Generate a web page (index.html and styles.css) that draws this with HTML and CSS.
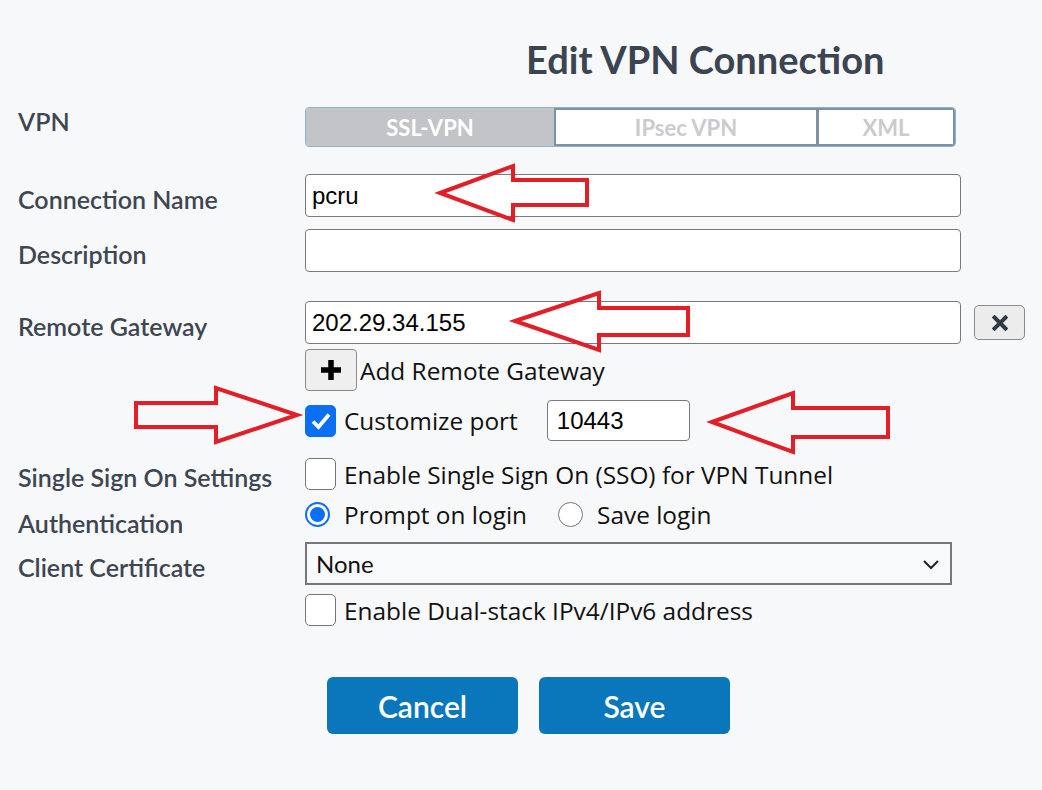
FILE: index.html
```html
<!DOCTYPE html>
<html>
<head>
<meta charset="utf-8">
<link rel="stylesheet" href="styles.css">
</head>
<body>
<div class="page">
  <h1 class="title">Edit VPN Connection</h1>

  <div class="row row-vpn">
    <div class="label label-top">VPN</div>
    <div class="control">
      <div class="segmented">
        <div class="seg seg-active seg-ssl">SSL-VPN</div>
        <div class="seg seg-ipsec">IPsec VPN</div>
        <div class="seg seg-xml">XML</div>
      </div>
    </div>
  </div>

  <div class="row row-name">
    <div class="label">Connection Name</div>
    <div class="control"><div class="input wide">pcru</div></div>
  </div>

  <div class="row row-desc">
    <div class="label">Description</div>
    <div class="control"><div class="input wide"></div></div>
  </div>

  <div class="row row-gw">
    <div class="label">Remote Gateway</div>
    <div class="control">
      <div class="input wide">202.29.34.155</div>
      <div class="icon-btn del-btn">
        <svg width="16" height="16" viewBox="0 0 16 16"><path d="M2.5 2.5 L13.5 13.5 M13.5 2.5 L2.5 13.5" stroke="#2f3a45" stroke-width="4" stroke-linecap="square"/></svg>
      </div>
    </div>
  </div>

  <div class="row row-add">
    <div class="label"></div>
    <div class="control">
      <div class="icon-btn add-btn">
        <svg width="22" height="22" viewBox="0 0 22 22"><path d="M11 1 V21 M1 11 H21" stroke="#000" stroke-width="5.5"/></svg>
      </div>
      <span class="opt-text add-text">Add Remote Gateway</span>
    </div>
  </div>

  <div class="row row-port">
    <div class="label"></div>
    <div class="control">
      <span class="check checked">
        <svg width="24" height="24" viewBox="0 0 24 24"><path d="M4 12.5 L9.5 18 L20 5.5" stroke="#fff" stroke-width="3.8" fill="none"/></svg>
      </span>
      <span class="opt-text">Customize port</span>
      <div class="input port">10443</div>
    </div>
  </div>

  <div class="row row-sso">
    <div class="label">Single Sign On Settings</div>
    <div class="control">
      <span class="check"></span>
      <span class="opt-text">Enable Single Sign On (SSO) for VPN Tunnel</span>
    </div>
  </div>

  <div class="row row-auth">
    <div class="label label-auth">Authentication</div>
    <div class="control">
      <span class="radio on"><span class="dot"></span></span>
      <span class="opt-text">Prompt on login</span>
      <span class="radio radio-second"></span>
      <span class="opt-text">Save login</span>
    </div>
  </div>

  <div class="row row-cert">
    <div class="label">Client Certificate</div>
    <div class="control">
      <div class="select">
        <span>None</span>
        <svg width="18" height="12" viewBox="0 0 18 12"><path d="M2 3 L9 10 L16 3" stroke="#222" stroke-width="2" fill="none"/></svg>
      </div>
    </div>
  </div>

  <div class="row row-dual">
    <div class="label"></div>
    <div class="control">
      <span class="check"></span>
      <span class="opt-text">Enable Dual-stack IPv4/IPv6 address</span>
    </div>
  </div>

  <div class="actions">
    <button class="btn">Cancel</button>
    <button class="btn">Save</button>
  </div>

  <svg class="arrows" width="1042" height="790" viewBox="0 0 1042 790">
    <g fill="none" stroke="#e31e27" stroke-width="4" stroke-linejoin="miter">
      <polygon points="440,193 513,166 513,180 587,180 587,205 513,205 513,220"/>
      <polygon points="515,321 599,293 599,308 688,308 688,335 599,335 599,350"/>
      <polygon points="712,422 793,393 793,408 888,408 888,437 793,437 793,452"/>
      <polygon points="136,403 216,403 216,388 297,415 216,442 216,427 136,427"/>
    </g>
  </svg>
</div>
</body>
</html>
```

FILE: styles.css
```css
* { box-sizing: border-box; }
html, body { margin: 0; padding: 0; }
body {
  background: #f7f8fa;
  font-family: Lato, "Liberation Sans", sans-serif;
  width: 1042px;
  height: 790px;
  overflow: hidden;
}
.page {
  position: relative;
  padding: 37px 0 0 18px;
  height: 790px;
}
.title {
  margin: 0 0 0 508px;
  font-family: Lato, sans-serif;
  font-weight: 700;
  font-size: 38px;
  line-height: 44px;
  height: 44px;
  color: #3b4451;
}
.row {
  display: grid;
  grid-template-columns: 287px auto;
  align-items: center;
}
.label {
  font-family: Lato, sans-serif;
  font-weight: 600;
  font-size: 25px;
  line-height: 24px;
  padding-top: 3px;
  margin-bottom: -3px;
  color: #3e4652;
  white-space: nowrap;
}
.label-top { align-self: start; padding-top: 2px; margin-bottom: 0; }
.label-auth { padding-top: 8px; margin-bottom: -8px; }
.control {
  display: flex;
  align-items: center;
}
.row-vpn { margin-top: 26px; }
.row-name { margin-top: 27px; }
.row-desc { margin-top: 12px; }
.row-gw { margin-top: 29px; }
.row-add { margin-top: 5px; }
.row-port { margin-top: 9px; }
.row-sso { margin-top: 17px; }
.row-auth { margin-top: 10px; }
.row-cert { margin-top: 13px; }
.row-dual { margin-top: 9px; }

.segmented {
  display: flex;
  width: 651px;
  height: 40px;
  border: 1px solid #8db3cf;
  border-radius: 4px;
  overflow: hidden;
  background: #fff;
}
.seg {
  display: flex;
  align-items: center;
  justify-content: center;
  font-family: Lato, sans-serif;
  font-weight: 700;
  font-size: 22px;
  color: #c9cbce;
  border: 2px solid #7d92a4;
  background: #fff;
}
.seg-active {
  background: #c2c4c7;
  color: #fff;
  border-color: #c2c4c7;
}
.seg-ssl { width: 248px; }
.seg-ipsec { width: 263px; border-right-width: 1px; }
.seg-xml { flex: 1; border-left-width: 2px; }

.input {
  height: 43px;
  border: 1.5px solid #7a7a7a;
  border-radius: 4px;
  background: #fff;
  font-family: "Liberation Sans", Arial, sans-serif;
  font-size: 24px;
  color: #000;
  padding: 0 0 0 6px;
  display: flex;
  align-items: center;
}
.wide { width: 656px; }
.port {
  width: 143px;
  height: 41px;
  margin-left: 29px;
  padding-left: 9px;
}

.icon-btn {
  display: flex;
  align-items: center;
  justify-content: center;
  background: #ececec;
  border: 1.5px solid #8a8a8a;
  border-radius: 5px;
}
.del-btn {
  width: 51px;
  height: 35px;
  margin-left: 13px;
}
.add-btn {
  width: 52px;
  height: 42px;
  border-radius: 4px;
  background: #efefef;
}

.opt-text {
  font-family: "Open Sans", "Noto Sans", sans-serif;
  font-size: 24.4px;
  line-height: 29px;
  color: #111;
  white-space: nowrap;
  margin-left: 8px;
}
.add-text { margin-left: 3px; }

.check {
  width: 31px;
  height: 32px;
  border: 1.5px solid #767676;
  border-radius: 5px;
  background: #fff;
  display: inline-flex;
  align-items: center;
  justify-content: center;
  flex: none;
}
.check.checked {
  background: #0b6ff4;
  border-color: #0b6ff4;
}

.radio {
  width: 25px;
  height: 25px;
  border-radius: 50%;
  border: 1.5px solid #767676;
  background: #fff;
  display: inline-flex;
  align-items: center;
  justify-content: center;
  flex: none;
}
.radio.on { border: 2px solid #0b6ff4; }
.radio .dot {
  width: 15px;
  height: 15px;
  border-radius: 50%;
  background: #0b6ff4;
}
.radio-second { margin-left: 31px; }
.row-auth .opt-text { margin-left: 14px; }

.select {
  width: 647px;
  height: 43px;
  border: 2px solid #777;
  background: #f8f9fb;
  display: flex;
  align-items: center;
  justify-content: space-between;
  padding: 0 10px 0 9px;
  font-family: Lato, sans-serif;
  font-size: 24px;
  color: #111;
}

.actions {
  display: flex;
  gap: 21px;
  margin: 51px 0 0 309px;
}
.btn {
  width: 191px;
  height: 57px;
  border: none;
  border-radius: 6px;
  background: #0a77bd;
  color: #fff;
  font-family: Lato, sans-serif;
  font-weight: 600;
  font-size: 30px;
  padding: 0;
}

.arrows {
  position: absolute;
  left: 0;
  top: 0;
  pointer-events: none;
}
```
